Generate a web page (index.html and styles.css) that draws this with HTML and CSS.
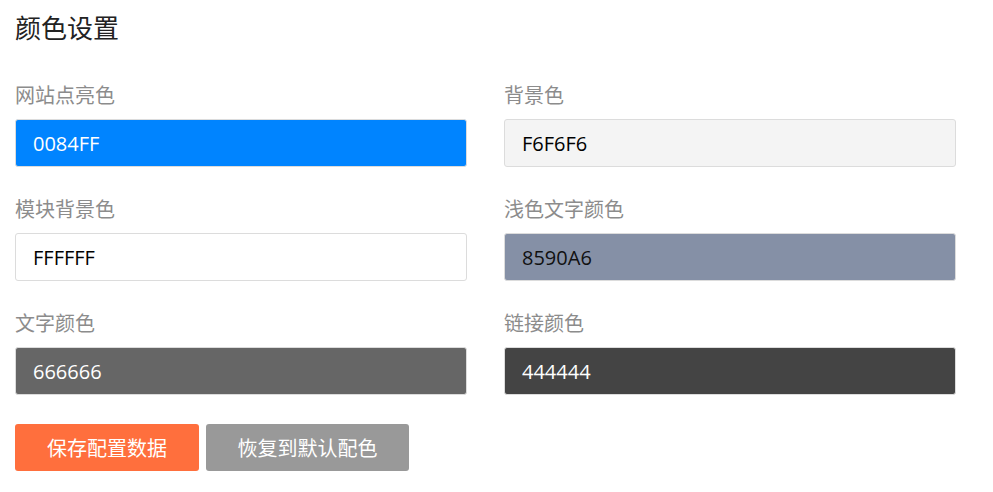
FILE: index.html
```html
<!DOCTYPE html>
<html lang="zh-CN">
<head>
<meta charset="utf-8">
<title>颜色设置</title>
<link rel="stylesheet" href="styles.css">
</head>
<body>
<div class="panel">
  <h2 class="title">颜色设置</h2>
  <div class="grid">
    <div class="field">
      <label class="label">网站点亮色</label>
      <input class="input" type="text" value="0084FF" style="background:#0084FF;color:#fff">
    </div>
    <div class="field">
      <label class="label">背景色</label>
      <input class="input" type="text" value="F6F6F6" style="background:#F4F4F4;color:#000">
    </div>
    <div class="field">
      <label class="label">模块背景色</label>
      <input class="input" type="text" value="FFFFFF" style="background:#FFFFFF;color:#000">
    </div>
    <div class="field">
      <label class="label">浅色文字颜色</label>
      <input class="input" type="text" value="8590A6" style="background:#8590A6;color:#111">
    </div>
    <div class="field">
      <label class="label">文字颜色</label>
      <input class="input" type="text" value="666666" style="background:#666666;color:#fff">
    </div>
    <div class="field">
      <label class="label">链接颜色</label>
      <input class="input" type="text" value="444444" style="background:#444444;color:#fff">
    </div>
  </div>
  <div class="actions">
    <button class="btn btn-save" type="button">保存配置数据</button>
    <button class="btn btn-reset" type="button">恢复到默认配色</button>
  </div>
</div>
</body>
</html>
```
FILE: styles.css
```css
html, body {
  margin: 0;
  padding: 0;
  background: #fff;
}
body {
  font-family: "Open Sans", "Noto Sans CJK SC", sans-serif;
}
.panel {
  padding: 11px 15px 10px;
}
.title {
  margin: 0;
  font-size: 26px;
  line-height: 34px;
  font-weight: normal;
  color: #222;
}
.grid {
  margin-top: 36px;
  display: grid;
  grid-template-columns: 452px 452px;
  column-gap: 37px;
  row-gap: 28px;
}
.field {
  display: flex;
  flex-direction: column;
}
.label {
  font-size: 20px;
  line-height: 30px;
  color: #8c8c8c;
  margin-bottom: 8px;
}
.input {
  box-sizing: border-box;
  height: 48px;
  width: 100%;
  border: 1px solid #dcdcdc;
  border-radius: 3px;
  padding: 0 17px;
  font-family: "Open Sans", "Noto Sans CJK SC", sans-serif;
  font-size: 20px;
  outline: none;
}
.actions {
  margin-top: 29px;
  display: flex;
  gap: 7px;
}
.btn {
  height: 47px;
  border: none;
  border-radius: 3px;
  padding: 0 30px;
  font-family: "Noto Sans CJK SC", sans-serif;
  font-size: 20px;
  color: #fff;
  cursor: pointer;
}
.btn-save {
  background: #FF6F3D;
  width: 184px;
}
.btn-reset {
  background: #999999;
  width: 203px;
}
```
